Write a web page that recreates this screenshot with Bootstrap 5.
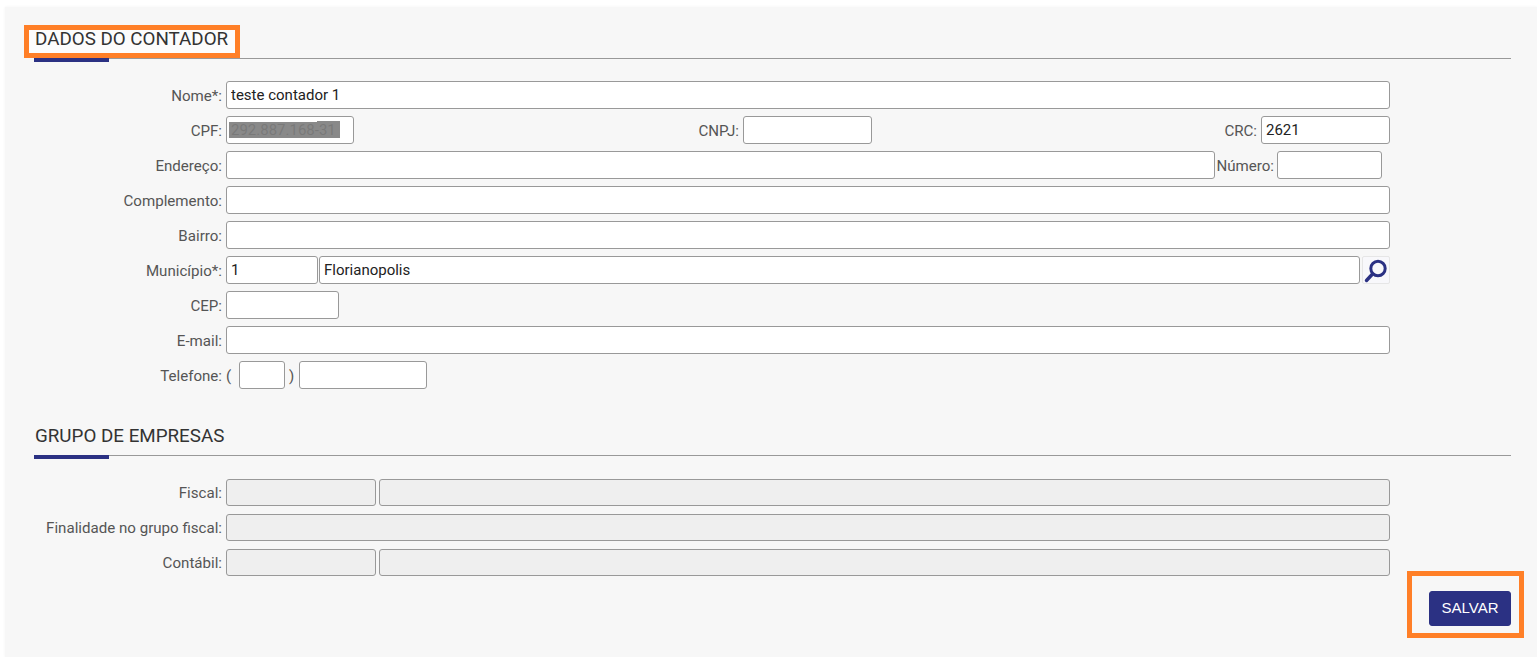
<!DOCTYPE html>
<html lang="pt-BR">
<head>
  <meta charset="UTF-8">
  <meta name="viewport" content="width=device-width, initial-scale=1">
  <title>Dados do contador</title>
  <link href="https://cdn.jsdelivr.net/npm/bootstrap@5.3.0/dist/css/bootstrap.min.css" rel="stylesheet">
  <style>
    body {
      background: #fff;
      font-family: Roboto, "Liberation Sans", sans-serif;
      font-size: 15.1px;
      color: #555;
      overflow: hidden;
    }
    .painel {
      position: relative;
      margin: 7px 0 0 5px;
      height: 650px;
      padding: 19px 26px 0 29px;
      background: #f7f7f7;
      box-shadow: 0 0 3px rgba(0, 0, 0, .05);
    }
    .secao-titulo {
      position: relative;
      height: 33px;
      margin: 0;
      border-bottom: 1px solid #999;
      font-size: 18.8px;
      font-weight: 400;
      line-height: 26px;
      color: #333;
      text-transform: uppercase;
      padding-left: 1px;
    }
    .secao-titulo::after {
      content: "";
      position: absolute;
      left: 0;
      bottom: -4px;
      width: 75px;
      height: 4px;
      background: #2b3183;
    }
    .secao-grupo { margin-top: 34px; }
    .linhas {
      display: flex;
      flex-direction: column;
      gap: 7px;
      width: 1356px;
    }
    .linhas-contador { margin-top: 22px; }
    .linhas-grupo { margin-top: 23px; gap: 8px; }
    .linha {
      display: flex;
      align-items: center;
      height: 28px;
    }
    .linhas-grupo .linha { height: 27px; }
    .linha label, .linha span.paren { padding-top: 2px; }
    .rotulo {
      flex: 0 0 188px;
      margin-right: 4px;
      text-align: right;
      white-space: nowrap;
    }
    .campo {
      display: block;
      min-width: 0;
      height: 100%;
      padding: 0 4px;
      background: #fff;
      border: 1px solid #999;
      border-radius: 3px;
      font-size: 15px;
      color: #222;
      outline: 0;
    }
    .campo:disabled { background: #efefef; }
    .cresce { flex: 1 1 0; }
    .larg-cpf { width: 128px; }
    .larg-cnpj { width: 129px; margin-right: 8px; }
    .larg-crc { width: 129px; }
    .larg-numero { width: 105px; margin-right: 8px; }
    .larg-cod { width: 92px; margin-right: 1px; }
    .larg-cep { width: 113px; }
    .larg-ddd { width: 46px; }
    .larg-fone { width: 128px; }
    .larg-grupo { width: 150px; margin-right: 3px; }
    .numero-rotulo { margin: 0 3px 0 1px; flex-shrink: 0; }
    .abre { width: 13px; }
    .fecha { width: 10px; margin-left: 4px; }
    .cpf-caixa { position: relative; height: 100%; }
    .cpf-borrao {
      position: absolute;
      left: 3px;
      top: 6px;
      width: 111px;
      height: 16px;
      background: rgba(128, 128, 128, .93);
    }
    .cpf-borrao::after {
      content: "";
      position: absolute;
      right: 0;
      top: -1px;
      width: 23px;
      height: 1px;
      background: rgba(128, 128, 128, .93);
    }
    .btn-lupa {
      flex: 0 0 28px;
      height: 28px;
      margin-left: 2px;
      padding: 0;
      background: #f8f8fb;
      border: 1px solid #e6e6e6;
      border-radius: 2px;
      line-height: 0;
    }
    .btn-salvar {
      position: absolute;
      right: 26px;
      top: 584px;
      width: 82px;
      height: 35px;
      padding: 0;
      background: #2b3183;
      border-color: #2b3183;
      border-radius: 3px;
      font-family: "Liberation Sans", Arial, sans-serif;
      font-size: 15px;
      color: #fff;
    }
    .destaque {
      position: absolute;
      border: 5px solid #ff7f27;
      pointer-events: none;
    }
    .destaque-titulo { left: 19px; top: 18px; width: 216px; height: 33px; background: rgba(255, 255, 255, .6); }
    .destaque-salvar { left: 1402px; top: 564px; width: 117px; height: 67px; }
  </style>
</head>
<body>
  <div class="painel">
    <div class="destaque destaque-titulo"></div>
    <h5 class="secao-titulo">Dados do contador</h5>
    <div class="linhas linhas-contador">
      <div class="linha">
        <label class="rotulo">Nome*:</label>
        <input class="campo cresce" value="teste contador 1">
      </div>
      <div class="linha">
        <label class="rotulo">CPF:</label>
        <div class="cpf-caixa">
          <input class="campo larg-cpf" value="292.887.168-31">
          <span class="cpf-borrao"></span>
        </div>
        <label class="ms-auto me-1">CNPJ:</label>
        <input class="campo larg-cnpj">
        <label class="ms-auto me-1">CRC:</label>
        <input class="campo larg-crc" value="2621">
      </div>
      <div class="linha">
        <label class="rotulo">Endereço:</label>
        <input class="campo cresce">
        <label class="numero-rotulo">Número:</label>
        <input class="campo larg-numero">
      </div>
      <div class="linha">
        <label class="rotulo">Complemento:</label>
        <input class="campo cresce">
      </div>
      <div class="linha">
        <label class="rotulo">Bairro:</label>
        <input class="campo cresce">
      </div>
      <div class="linha">
        <label class="rotulo">Município*:</label>
        <input class="campo larg-cod" value="1">
        <input class="campo cresce" value="Florianopolis">
        <button type="button" class="btn-lupa" aria-label="Buscar">
          <svg width="26" height="26" viewBox="0 0 26 26">
            <circle cx="15" cy="11.5" r="7.2" fill="none" stroke="#2b3183" stroke-width="3"/>
            <path d="M9.5 17 L3.5 23.5" stroke="#2b3183" stroke-width="3.4" stroke-linecap="round"/>
          </svg>
        </button>
      </div>
      <div class="linha">
        <label class="rotulo">CEP:</label>
        <input class="campo larg-cep">
      </div>
      <div class="linha">
        <label class="rotulo">E-mail:</label>
        <input class="campo cresce">
      </div>
      <div class="linha">
        <label class="rotulo">Telefone:</label>
        <span class="paren abre">(</span>
        <input class="campo larg-ddd">
        <span class="paren fecha">)</span>
        <input class="campo larg-fone">
      </div>
    </div>

    <h5 class="secao-titulo secao-grupo">Grupo de empresas</h5>
    <div class="linhas linhas-grupo">
      <div class="linha">
        <label class="rotulo">Fiscal:</label>
        <input class="campo larg-grupo" disabled>
        <input class="campo cresce" disabled>
      </div>
      <div class="linha">
        <label class="rotulo">Finalidade no grupo fiscal:</label>
        <input class="campo cresce" disabled>
      </div>
      <div class="linha">
        <label class="rotulo">Contábil:</label>
        <input class="campo larg-grupo" disabled>
        <input class="campo cresce" disabled>
      </div>
    </div>

    <button type="button" class="btn btn-primary btn-salvar">SALVAR</button>
    <div class="destaque destaque-salvar"></div>
  </div>
  <script src="https://cdn.jsdelivr.net/npm/bootstrap@5.3.0/dist/js/bootstrap.bundle.min.js"></script>
</body>
</html>
